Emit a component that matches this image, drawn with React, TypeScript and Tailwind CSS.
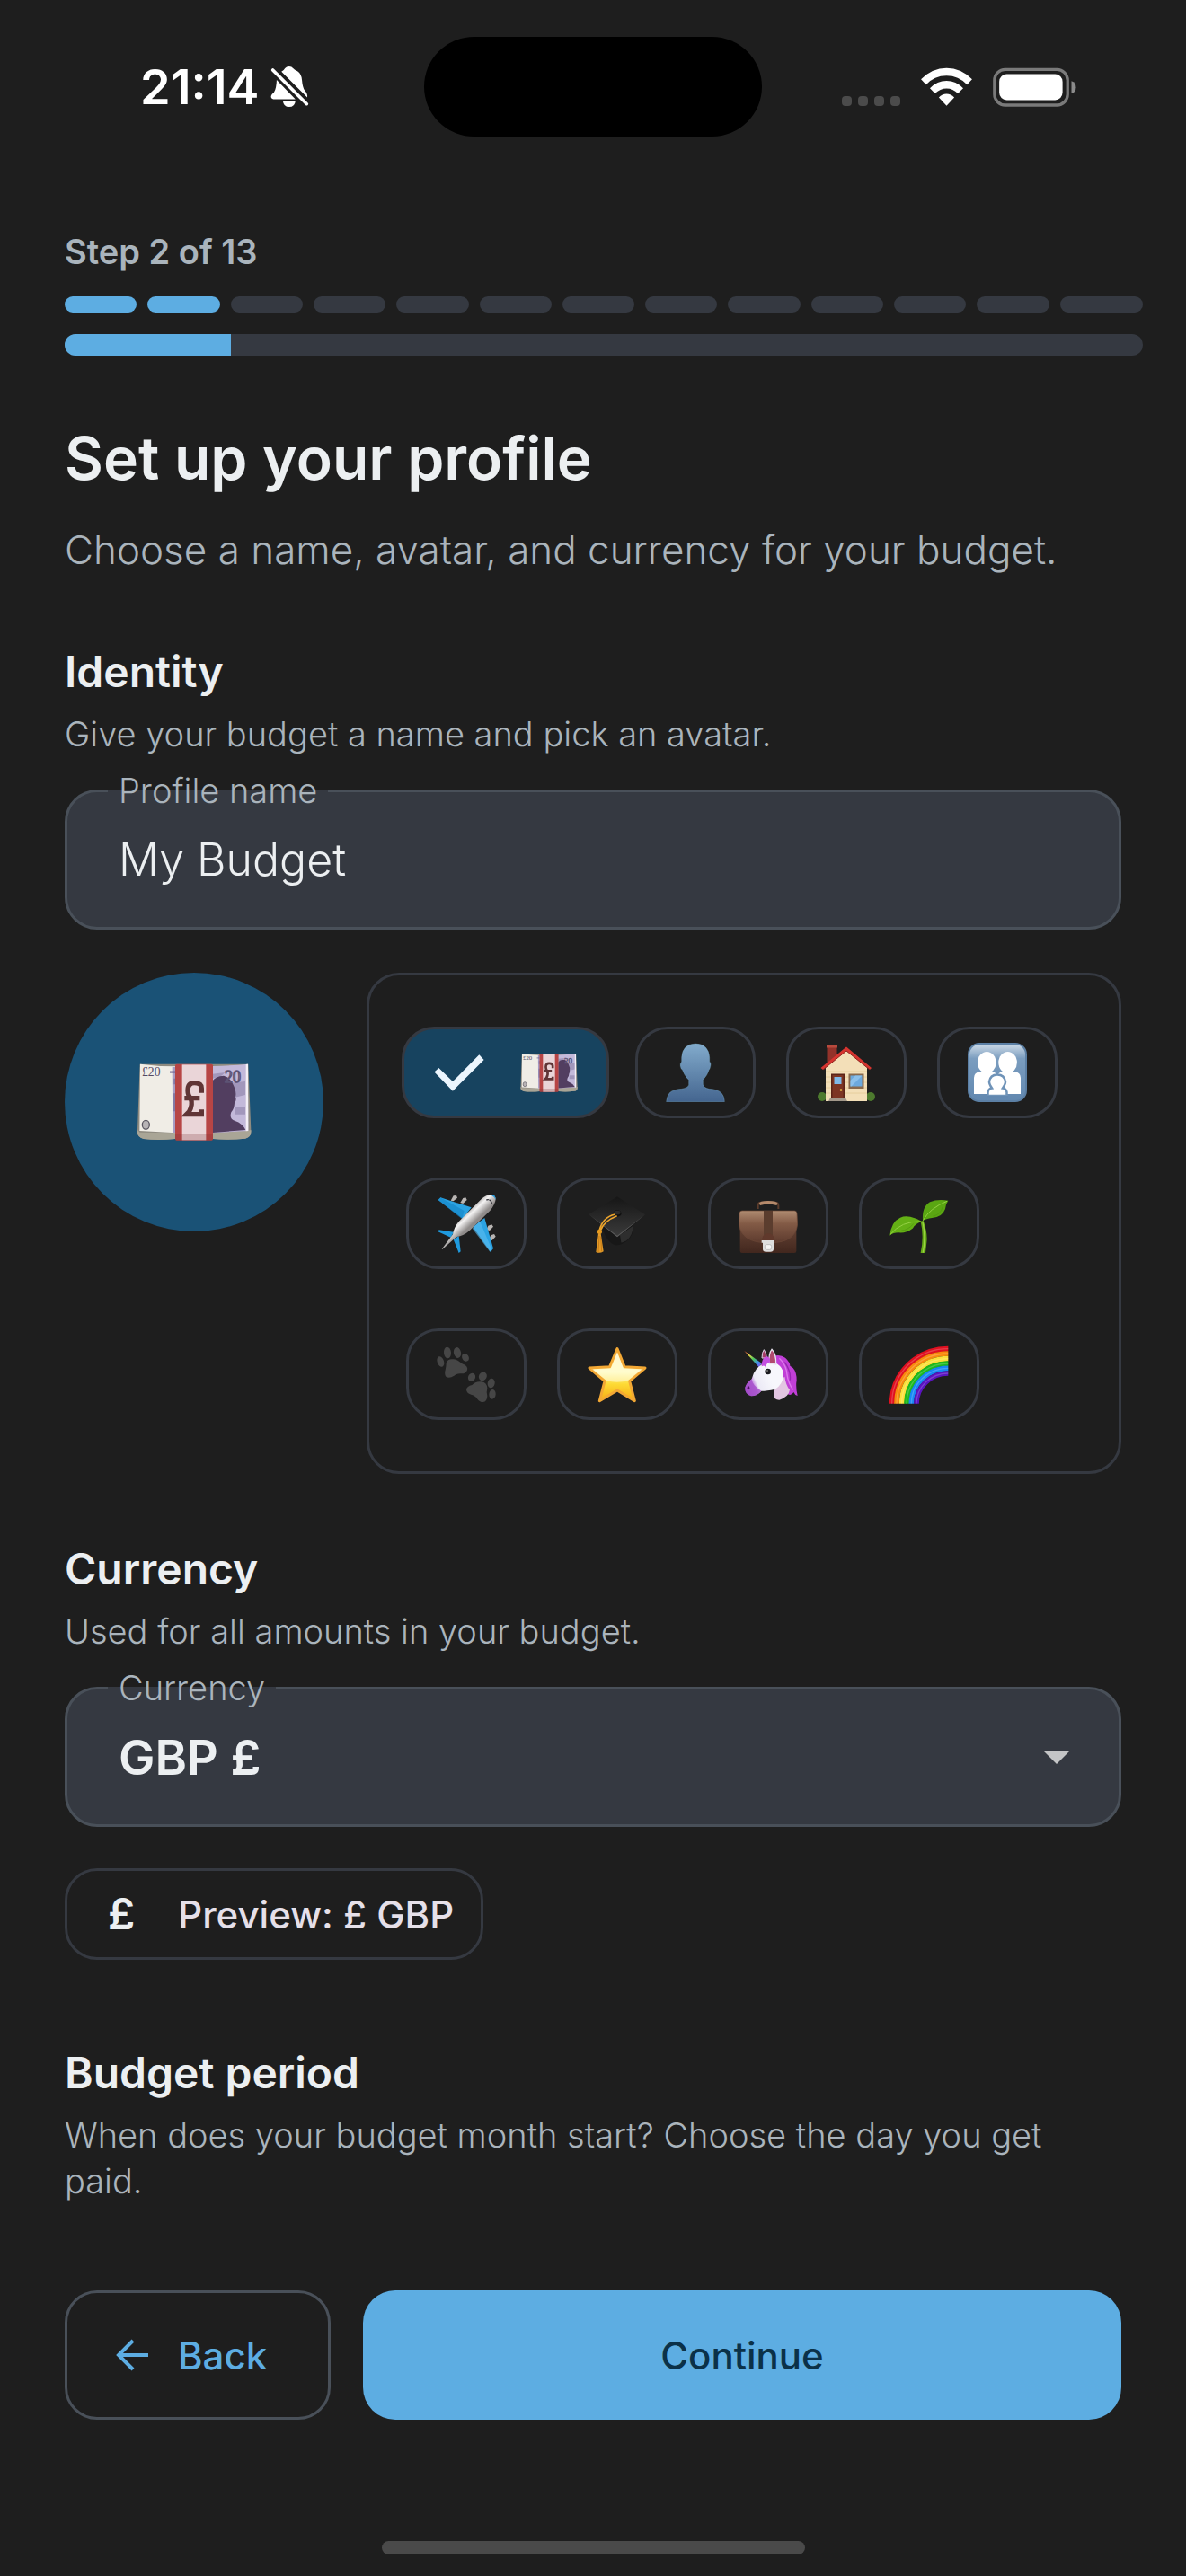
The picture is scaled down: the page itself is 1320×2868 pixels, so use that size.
import { useState } from "react";
import type { ComponentType, ReactNode } from "react";

type ArtProps = { className?: string };

function Money({ className }: ArtProps) {
  return (
    <svg viewBox="40 100 382 258" className={className} aria-hidden="true">
      <path d="M42 322 L50 102 L412 102 L421 322 Q424 345 402 351 Q340 357 294 352 H168 Q110 358 62 352 Q38 345 42 322Z" fill="#8f8b80" />
      <path d="M42 322 L50 330 L170 332 H294 L412 324 L421 322 Q424 345 402 351 Q340 357 294 352 H168 Q110 358 62 352 Q38 345 42 322Z" fill="#a9a596" />
      <path d="M51 102 Q110 110 170 110 V332 L49 325Z" fill="#f0ede6" />
      <path d="M158 112 H170 V331 H160Z" fill="#a79cc4" />
      <path d="M150 125 h18 v8 h-18z M163 150 h7 v20 h-7z M162 200 h8 v60 h-8z" fill="#6d6291" opacity=".6" />
      <path d="M293 109 Q350 108 411 102 L412 325 L293 332Z" fill="#c3b9da" />
      <path d="M404 103 L411 102 L412 325 L404 326Z" fill="#f4f0f6" />
      <path d="M293 135 L335 130 L318 145 L293 150Z M345 165 L402 160 V205 L362 215Z M368 245 H402 V270 H366Z" fill="#8c80a8" opacity=".6" />
      <path d="M293 158 Q302 143 330 141 Q352 146 361 170 Q374 195 369 212 Q374 222 366 232 Q365 252 355 263 Q347 285 368 292 Q392 300 403 322 L293 331Z" fill="#523e60" />
      <text x="333" y="164" fontSize="54" fill="#c3b9da" stroke="#5d5374" strokeWidth="4" fontFamily="'Liberation Serif', serif">20</text>
      <text x="57" y="141" fontSize="41" fill="#554a63" fontFamily="'Liberation Serif', serif">£20</text>
      <ellipse cx="70" cy="305" rx="12" ry="15" fill="#b8b4b6" stroke="#5b5761" strokeWidth="4" />
      <rect x="168" y="102" width="126" height="255" rx="5" fill="#b74545" />
      <rect x="191" y="104" width="80" height="252" fill="#ead5d8" />
      <path d="M168 334 H294 V352 Q294 357 289 357 H173 Q168 357 168 352Z" fill="#7d3532" opacity=".25" />
      <path d="M256 198 V183 Q256 165 232 165 Q210 165 210 190 Q210 206 220 218 Q228 238 214 262 L206 270 H256 V254 M199 216 H250" fill="none" stroke="#603536" strokeWidth="16" />
    </svg>
  );
}

function Person({ className }: ArtProps) {
  return (
    <svg viewBox="933 123 198 198" className={className} aria-hidden="true">
      <defs>
        <linearGradient id="person" x1="0" y1="0" x2="0" y2="1">
          <stop offset="0" stopColor="#82abcc" />
          <stop offset="1" stopColor="#44658f" />
        </linearGradient>
      </defs>
      <path
        d="M1032 126 Q1076 127 1079 172 V187 Q1085 188 1082 202 Q1080 212 1077 214 Q1072 232 1057 247 V262 Q1060 274 1078 277 Q1108 279 1119 291 Q1129 302 1129 320 H935 Q936 302 946 290 Q957 279 986 277 Q1008 273 1010 263 V247 Q994 232 989 214 Q984 212 982 202 Q980 189 986 187 V172 Q989 127 1032 126Z"
        fill="url(#person)"
        stroke="#7db3cf"
        strokeWidth="1"
      />
    </svg>
  );
}

function House({ className }: ArtProps) {
  return (
    <svg viewBox="0 0 66 66" className={className} aria-hidden="true">
      <circle cx="6" cy="60" r="5" fill="#4d7a2e" />
      <circle cx="60" cy="60" r="5" fill="#4d7a2e" />
      <path d="M11.5 3 H22.5 V14 L11.5 23Z" fill="#93322a" />
      <path d="M11 2.5 H23 V5.5 H11Z" fill="#b84a3d" />
      <path d="M10 26 L33 7 L56 26 V65 H10Z" fill="#f3dfb8" />
      <path d="M10 32 H56 M10 38 H56 M10 44 H56 M10 50 H56 M10 56 H56" stroke="#e2c998" strokeWidth=".8" />
      <path d="M33 4.5 L61 28 L59 30 L33 9 L7 30 L4.5 28Z" fill="#d6342f" />
      <path d="M7 30 L33 9 L59 30" fill="none" stroke="#8e241f" strokeWidth="1" />
      <rect x="16" y="34.5" width="15" height="28" fill="#5b2417" />
      <rect x="17.5" y="36" width="12" height="26" fill="#7c3523" />
      <rect x="19.5" y="38" width="8" height="8" fill="#7fb9e8" />
      <circle cx="27" cy="52.5" r="1.3" fill="#f2c94c" />
      <rect x="35.5" y="34.5" width="17" height="16.5" fill="#8a6a4d" />
      <rect x="37.5" y="36.5" width="13" height="12" fill="#6da9dd" />
      <path d="M37.5 42 L43 36.5 H50.5 L38.5 48.5 H37.5Z" fill="#8cc0ea" />
      <path d="M15 61.5 H32 L34 65 H13Z" fill="#a3988a" />
    </svg>
  );
}

function Family({ className }: ArtProps) {
  return (
    <svg viewBox="0 0 66 66" className={className} aria-hidden="true">
      <defs>
        <linearGradient id="family" x1="0" y1="0" x2="0" y2="1">
          <stop offset="0" stopColor="#cbd9e6" />
          <stop offset=".25" stopColor="#7b9dbf" />
          <stop offset="1" stopColor="#6288b0" />
        </linearGradient>
      </defs>
      <rect x="0" y="0" width="66" height="66" rx="13" fill="#5c80a5" />
      <rect x="2" y="2" width="62" height="62" rx="11" fill="url(#family)" />
      <g fill="#fff">
        <ellipse cx="21.3" cy="22" rx="10.3" ry="12" />
        <ellipse cx="44.6" cy="22" rx="10.3" ry="12" />
        <path d="M7 57 V39 Q7 33 14 32 H27 Q33 33 33 39 Q33 33 39 32 H52 Q59 33 59 39 V57Z" />
      </g>
      <path d="M22.5 59 V55 Q23 51 27 50.5 Q24 46 24 43.5 Q25 35.5 33 35.5 Q41 35.5 42 43.5 Q42 46 39 50.5 Q43 51 43.5 55 V59Z" fill="#fff" stroke="#6f93b8" strokeWidth="2.5" />
      <path d="M21 60 H45" stroke="#6288b0" strokeWidth="2" />
    </svg>
  );
}

function Plane({ className }: ArtProps) {
  return (
    <svg viewBox="78 27 198 198" className={className} aria-hidden="true">
      <defs>
        <linearGradient id="fuselage" gradientUnits="userSpaceOnUse" x1="180" y1="80" x2="212" y2="114">
          <stop offset="0" stopColor="#a9a5a4" />
          <stop offset=".4" stopColor="#f4f3f3" />
          <stop offset="1" stopColor="#8f8b8a" />
        </linearGradient>
      </defs>
      <g fill="#b9b5b3">
        <path d="M125 50 L134 34 L144 33 L147 41 L134 52Z" />
        <path d="M157 57 L166 42 L175 40 L179 48 L166 60Z" />
        <path d="M244 148 L250 134 L262 130 L267 137 L255 150Z" />
        <path d="M252 180 L259 166 L270 162 L275 170 L263 183Z" />
      </g>
      <path d="M83 48 L91 40 L194 73 L165 110Z" fill="#2ba3e3" />
      <path d="M83 48 L91 40 L170 84 L163 112Z" fill="#1787c9" opacity=".7" />
      <path d="M238 108 L267 210 L258 222 L199 138Z" fill="#2ba3e3" />
      <path d="M222 118 L262 214 L256 221 L197 143Z" fill="#5cbcf0" opacity=".6" />
      <path d="M81 153 L86 148 L135 155 L125 173Z" fill="#1f9ade" />
      <path d="M134 180 L152 168 L158 220 L152 225Z" fill="#1f9ade" />
      <path
        d="M95 212 L132 163 Q136 138 152 120 L228 44 Q246 29 264 31 Q275 34 275 46 Q273 64 256 84 L188 150 Q168 168 144 171 L98 212Z"
        fill="url(#fuselage)"
      />
      <path d="M258 31 Q275 29 275 47 Q270 37 258 31Z" fill="#1f9ade" />
      <path d="M244 48 Q258 43 263 61" fill="none" stroke="#33333a" strokeWidth="4" strokeDasharray="7 2" />
    </svg>
  );
}

function GradCap({ className }: ArtProps) {
  return (
    <svg viewBox="582 27 198 198" className={className} aria-hidden="true">
      <defs>
        <linearGradient id="cap" x1="0" y1="0" x2="0" y2="1">
          <stop offset="0" stopColor="#161616" />
          <stop offset="1" stopColor="#3b3b3b" />
        </linearGradient>
      </defs>
      <path d="M630 130 L735 125 Q738 165 712 186 Q690 202 672 198 Q640 186 630 130Z" fill="#171717" />
      <path d="M690 165 L733 135 Q734 165 712 184 Q698 192 694 190Z" fill="#2e2e2e" />
      <path d="M586 96 L681 37 L774 97 L681 171Z" fill="url(#cap)" />
      <path d="M586 96 L681 167 L774 97 L681 172Z" fill="#5a5a5a" />
      <ellipse cx="681" cy="93" rx="14" ry="11" fill="#111" />
      <ellipse cx="681" cy="90" rx="11" ry="7" fill="#2c2c2c" />
      <path d="M673 96 Q632 106 621 150 M680 101 Q636 118 625 150" fill="none" stroke="#eda52c" strokeWidth="5" />
      <circle cx="622" cy="154" r="8" fill="#e59a1f" />
      <path d="M618 160 H626 L635 220 Q622 228 610 222Z" fill="#e39a27" />
      <path d="M621 168 L618 222 M626 170 L629 220" stroke="#b86d11" strokeWidth="2" />
    </svg>
  );
}

function Briefcase({ className }: ArtProps) {
  return (
    <svg viewBox="96 27 198 198" className={className} aria-hidden="true">
      <defs>
        <linearGradient id="flap" x1="0" y1="0" x2="0" y2="1">
          <stop offset="0" stopColor="#b08c72" />
          <stop offset=".4" stopColor="#835b46" />
          <stop offset="1" stopColor="#5d3b2e" />
        </linearGradient>
        <linearGradient id="case" x1="0" y1="0" x2="0" y2="1">
          <stop offset="0" stopColor="#7a5341" />
          <stop offset="1" stopColor="#42271e" />
        </linearGradient>
      </defs>
      <path d="M161 78 V66 Q161 56 172 56 H218 Q229 56 229 66 V78" fill="none" stroke="#5c3c2c" strokeWidth="6" />
      <path d="M164 60 Q166 51 195 51 Q224 51 227 60 L223 66 Q195 58 168 66Z" fill="#b58a6b" />
      <rect x="101" y="90" width="188" height="135" rx="7" fill="url(#case)" />
      <path d="M97 130 L99 92 Q100 84 108 84 H283 Q290 84 291 92 L293 130 Q286 190 205 191 H185 Q106 188 97 130Z" fill="url(#flap)" stroke="#6d4938" strokeWidth="2" />
      <rect x="180" y="84" width="30" height="82" fill="#5b3d2e" />
      <path d="M175 184 V176 Q180 160 195 160 Q210 160 215 176 V184Z" fill="#60392c" />
      <path d="M173 183 H216 V191 H213 V213 Q212 221 203 221 H187 Q178 221 177 213 V191 H173Z" fill="#dedede" />
      <rect x="184" y="197" width="22" height="17" rx="6" fill="#f5f5f5" stroke="#aaa" strokeWidth="2" />
    </svg>
  );
}

function Seedling({ className }: ArtProps) {
  return (
    <svg viewBox="600 27 198 198" className={className} aria-hidden="true">
      <path d="M704 120 L713 116 Q728 160 724 190 L720 224 Q712 230 704 224 Q716 170 704 120Z" fill="#68ad18" />
      <path d="M711 122 Q722 170 712 224" fill="none" stroke="#9ad443" strokeWidth="4" />
      <path d="M601 167 Q606 120 636 107 Q665 95 708 120 Q690 124 677 143 Q655 160 630 157 Q612 157 601 167Z" fill="#64b015" />
      <path d="M603 163 Q640 118 704 120" fill="none" stroke="#94d044" strokeWidth="3" />
      <path d="M711 118 Q708 70 735 55 Q760 44 796 50 Q788 60 786 78 Q776 106 742 108 Q722 110 711 118Z" fill="#5aa612" />
      <path d="M712 116 Q735 75 792 52" fill="none" stroke="#94d044" strokeWidth="3" />
      <path d="M640 150 Q660 150 680 128 M745 102 Q770 98 778 70" fill="none" stroke="#4c8f0e" strokeWidth="3" opacity=".6" />
    </svg>
  );
}

function Paws({ className }: ArtProps) {
  return (
    <svg viewBox="78 531 198 198" className={className} aria-hidden="true">
      <g fill="#464646">
        <ellipse cx="91" cy="588" rx="11" ry="18" transform="rotate(-18 91 588)" />
        <ellipse cx="114" cy="558" rx="12" ry="19" transform="rotate(-5 114 558)" />
        <ellipse cx="147" cy="558" rx="12" ry="18" transform="rotate(-12 147 558)" />
        <ellipse cx="174" cy="574" rx="11" ry="14" transform="rotate(-30 174 574)" />
        <path d="M110 592 Q116 577 134 580 Q145 580 155 589 Q162 596 173 599 Q184 607 179 618 Q174 629 160 628 Q145 627 136 635 Q120 646 109 638 Q103 630 107 616 Q110 605 110 592Z" />
        <ellipse cx="195" cy="640" rx="12" ry="14" transform="rotate(25 195 640)" />
        <ellipse cx="232" cy="637" rx="13" ry="15" transform="rotate(30 232 637)" />
        <ellipse cx="260" cy="660" rx="12" ry="16" transform="rotate(12 260 660)" />
        <ellipse cx="264" cy="697" rx="11" ry="16" transform="rotate(5 264 697)" />
        <path d="M196 666 Q208 652 228 655 Q246 658 247 677 Q243 690 247 703 Q246 722 233 723 Q222 723 214 713 Q208 702 193 698 Q177 693 177 681 Q179 670 196 666Z" />
      </g>
    </svg>
  );
}

function Star({ className }: ArtProps) {
  return (
    <svg viewBox="582 531 198 198" className={className} aria-hidden="true">
      <defs>
        <linearGradient id="star" x1="0" y1="0" x2="0" y2="1">
          <stop offset="0" stopColor="#fff0c4" />
          <stop offset=".45" stopColor="#fffab4" />
          <stop offset=".68" stopColor="#fdda34" />
          <stop offset="1" stopColor="#f7a914" />
        </linearGradient>
      </defs>
      <path
        d="M681 545 L705 605 L774 609 L722 653 L739 719 L681 684 L622 719 L639 653 L588 609 L656 605Z"
        fill="url(#star)"
        stroke="#f3a834"
        strokeWidth="9"
        strokeLinejoin="round"
      />
      <path d="M681 556 L701 611 L764 614 L718 650 Q680 662 644 650 L598 614 L660 611Z" fill="#fffde6" opacity=".5" />
    </svg>
  );
}

function Unicorn({ className }: ArtProps) {
  return (
    <svg viewBox="96 531 198 198" className={className} aria-hidden="true">
      <defs>
        <linearGradient id="horn" x1="0" y1="0" x2="1" y2="1">
          <stop offset="0" stopColor="#ef3b3b" />
          <stop offset=".25" stopColor="#f9dc4a" />
          <stop offset=".5" stopColor="#4cc75a" />
          <stop offset=".75" stopColor="#3f8df0" />
          <stop offset="1" stopColor="#a63fe0" />
        </linearGradient>
        <linearGradient id="muzzle" gradientUnits="userSpaceOnUse" x1="120" y1="690" x2="205" y2="650">
          <stop offset="0" stopColor="#9b3fc4" />
          <stop offset=".35" stopColor="#c07be0" />
          <stop offset=".5" stopColor="#eceaf6" />
          <stop offset="1" stopColor="#f7f7fc" />
        </linearGradient>
      </defs>
      <path d="M205 572 Q232 560 252 575 Q268 590 268 602 Q290 612 290 650 Q286 672 293 702 Q284 700 280 690 Q272 705 255 694 Q240 680 240 650Z" fill="#c03fd6" />
      <path d="M232 577 Q256 600 258 632 Q262 660 278 682" fill="none" stroke="#dc78ec" strokeWidth="4" />
      <path d="M250 590 Q272 620 268 650" fill="none" stroke="#9526b0" strokeWidth="4" />
      <path d="M222 660 L250 638 Q254 668 267 682 Q264 706 232 716 Q214 716 213 700 Q216 680 222 660Z" fill="#e3c6e2" />
      <path d="M174 576 Q174 556 181 548 Q190 562 190 576Z" fill="#a33c66" stroke="#d9d3e4" strokeWidth="3" />
      <path d="M115 552 L174 594 L164 607Z" fill="url(#horn)" />
      <path
        d="M163 605 Q185 588 215 590 Q246 604 246 632 Q244 664 218 680 Q190 686 172 686 Q158 703 138 703 Q116 696 118 674 Q124 658 140 646 Q146 620 163 605Z"
        fill="url(#muzzle)"
      />
      <path d="M118 674 Q124 658 140 646 Q142 668 172 686 Q158 703 138 703 Q116 696 118 674Z" fill="#a54fc9" opacity=".8" />
      <path d="M198 594 Q196 560 207 547 Q222 562 221 597Z" fill="#b14a6e" stroke="#e9e4f0" strokeWidth="4" />
      <path d="M173 604 Q172 578 188 570 Q206 572 200 592 Q190 590 186 608 Q184 598 173 604Z" fill="#c44fe0" />
      <circle cx="194" cy="621" r="10" fill="#1a1a1f" />
      <circle cx="192" cy="618" r="3" fill="#777" />
      <ellipse cx="129" cy="676" rx="4" ry="6" fill="#4a1360" />
    </svg>
  );
}

const rainbowBands: [number, string][] = [
  [188, "#e01020"],
  [172, "#f98a0c"],
  [155, "#fbe03a"],
  [139, "#1db91d"],
  [123, "#1788f5"],
  [106, "#5a13c0"],
];

function Rainbow({ className }: ArtProps) {
  return (
    <svg viewBox="600 531 198 198" className={className} aria-hidden="true">
      {rainbowBands.map(([r, color]) => (
        <g key={color} fill="none">
          <path d={`M${796 - r} 728 A${r} ${r - 5} 0 0 1 796 ${733 - r}`} stroke={color} strokeWidth="17" />
          <path d={`M${796 - r} 728 A${r} ${r - 5} 0 0 1 796 ${733 - r}`} stroke="#fff" strokeOpacity=".2" strokeWidth="4" />
        </g>
      ))}
    </svg>
  );
}

function BellOff() {
  return (
    <svg viewBox="484 74 130 140" className="h-[47px] w-[43px]" aria-hidden="true" fill="#fff">
      <path d="M521 93 Q530 88 533 82 Q538 76 547 76 Q556 76 560 82 Q565 88 575 92 Q589 102 590 122 Q592 146 599 156 Q610 168 608 180Z" />
      <path d="M505 121 L568 186 H494 Q485 185 486 176 Q487 170 496 163 Q504 150 505 121Z" />
      <path d="M526 192 H568 Q566 212 547 212 Q528 212 526 192Z" />
      <path d="M492 88 L606 202" stroke="#fff" strokeWidth="11" strokeLinecap="round" />
    </svg>
  );
}

function Wifi() {
  return (
    <svg viewBox="312 73 178 130" className="h-[43px] w-[59px]" aria-hidden="true" fill="#fff">
      <path d="M315 113 Q352 75 401 75 Q450 75 487 113 L470 131 Q441 101 401 101 Q360 101 332 131Z" />
      <path d="M345 143 Q369 118 401 118 Q433 118 457 143 L439 161 Q423 144 401 144 Q379 144 362 161Z" />
      <path d="M375 174 Q386 162 401 162 Q416 162 427 174 L401 202Z" />
    </svg>
  );
}

function Battery() {
  return (
    <svg viewBox="553 73 284 133" className="h-[44px] w-[95px]" aria-hidden="true">
      <rect x="560" y="80" width="246" height="120" rx="36" fill="none" stroke="#7a7a7a" strokeWidth="10" />
      <rect x="576" y="96" width="213" height="87" rx="25" fill="#fff" />
      <path d="M819 119 Q834 124 834 140 Q834 156 819 161Z" fill="#8b8b8b" />
    </svg>
  );
}

function StatusBar() {
  return (
    <header className="grid grid-cols-[1fr_376px_1fr] pt-[41px]">
      <div className="flex items-center gap-3 pl-[156px]">
        <span className="text-[54px] leading-[64px] font-semibold text-white">21:14</span>
        <BellOff />
      </div>
      <div className="h-[111px] rounded-full bg-black" />
      <div className="flex items-center justify-end pr-[121px]">
        <div className="flex h-[43px] items-end gap-[7px]">
          {[0, 1, 2, 3].map((dot) => (
            <span key={dot} className="size-[11px] rounded-[4px] bg-[#4b4b4b]" />
          ))}
        </div>
        <div className="ml-[22px] flex items-center gap-[21px]">
          <Wifi />
          <Battery />
        </div>
      </div>
    </header>
  );
}

const totalSteps = 13;
const currentStep = 2;

function Progress() {
  return (
    <div>
      <p className="text-[38px] leading-[48px] font-semibold text-[#aab4bc]">
        Step {currentStep} of {totalSteps}
      </p>
      <div className="-mr-6 mt-[26px] grid grid-cols-13">
        {Array.from({ length: totalSteps }, (_, i) => (
          <div key={i} className="pr-3 last:pr-0">
            <div className={i < currentStep ? "h-[18px] rounded-full bg-[#5dade2]" : "h-[18px] rounded-full bg-[#353941]"} />
          </div>
        ))}
      </div>
      <div
        role="progressbar"
        aria-label="Setup progress"
        aria-valuemin={0}
        aria-valuemax={totalSteps}
        aria-valuenow={currentStep}
        className="-mr-6 mt-6 h-6 overflow-hidden rounded-full bg-[#353941]"
      >
        <div className="h-full bg-[#5dade2]" style={{ width: `${(currentStep / totalSteps) * 100}%` }} />
      </div>
    </div>
  );
}

function SectionHeading({ title, children }: { title: string; children: ReactNode }) {
  return (
    <>
      <h2 className="text-[48px] leading-[64px] font-semibold text-[#eceff1]">{title}</h2>
      <p className="mt-3 text-[38px] leading-[51px] font-light text-[#aab4bc]">{children}</p>
    </>
  );
}

function Field({ id, label, children }: { id: string; label: string; children: ReactNode }) {
  return (
    <div className="relative mt-9 flex h-[156px] items-center rounded-[36px] border-3 border-[#495059] bg-[#353941]">
      {children}
      <label
        htmlFor={id}
        className="absolute -top-[3px] left-[45px] h-[3px] bg-[#353941] px-3 text-[38px] leading-[3px] font-light text-[#aab4bc]"
      >
        {label}
      </label>
    </div>
  );
}

const avatars: { name: string; Art: ComponentType<ArtProps> }[] = [
  { name: "Pound notes", Art: Money },
  { name: "Person", Art: Person },
  { name: "House", Art: House },
  { name: "Family", Art: Family },
  { name: "Airplane", Art: Plane },
  { name: "Graduation cap", Art: GradCap },
  { name: "Briefcase", Art: Briefcase },
  { name: "Seedling", Art: Seedling },
  { name: "Paw prints", Art: Paws },
  { name: "Star", Art: Star },
  { name: "Unicorn", Art: Unicorn },
  { name: "Rainbow", Art: Rainbow },
];

function AvatarPicker() {
  const [selected, setSelected] = useState(0);
  const Current = avatars[selected].Art;
  return (
    <div className="mt-12 flex items-start gap-12">
      <div className="flex size-[288px] shrink-0 items-center justify-center rounded-full bg-[#1a5276]">
        <Current className="h-[86px] w-[128px]" />
      </div>
      <div className="flex flex-1 flex-wrap gap-x-[34px] gap-y-[66px] rounded-[36px] border-3 border-[#353941] px-[41px] py-[57px]">
        {avatars.map(({ name, Art }, i) => (
          <button
            key={name}
            type="button"
            aria-label={name}
            aria-pressed={i === selected}
            onClick={() => setSelected(i)}
            className={
              i === selected
                ? "-mx-[5px] flex h-[102px] w-[231px] items-center justify-center gap-10 rounded-[36px] border-3 border-[#353941] bg-[#17435f]"
                : "flex h-[102px] w-[134px] items-center justify-center rounded-[36px] border-3 border-[#353941]"
            }
          >
            {i === selected && (
              <svg viewBox="156 159 169 124" className="h-[41px] w-[56px]" aria-hidden="true">
                <path d="M157 218 L172 204 L219 250 L308 160 L324 177 L219 282Z" fill="#ebf5fd" />
              </svg>
            )}
            <Art className={i === 0 ? "h-[43px] w-[64px]" : "size-[66px]"} />
          </button>
        ))}
      </div>
    </div>
  );
}

export default function App() {
  return (
    <div className="flex min-h-screen flex-col bg-[#1e1e1e] font-['Inter',sans-serif] text-[#eceff1]">
      <StatusBar />
      <main className="px-[72px] pt-[104px]">
        <Progress />
        <h1 className="mt-[74px] text-[66px] leading-[80px] font-semibold">Set up your profile</h1>
        <p className="mt-8 text-[44px] leading-[60px] font-light text-[#aab4bc]">
          Choose a name, avatar, and currency for your budget.
        </p>

        <section className="mt-[74px]">
          <SectionHeading title="Identity">Give your budget a name and pick an avatar.</SectionHeading>
          <Field id="profile-name" label="Profile name">
            <input
              id="profile-name"
              type="text"
              defaultValue="My Budget"
              className="h-full w-full rounded-[33px] bg-transparent px-[57px] text-[50px] font-light outline-none"
            />
          </Field>
          <AvatarPicker />
        </section>

        <section className="mt-[74px]">
          <SectionHeading title="Currency">Used for all amounts in your budget.</SectionHeading>
          <Field id="currency" label="Currency">
            <select
              id="currency"
              defaultValue="GBP"
              className="h-full w-full appearance-none rounded-[33px] bg-transparent px-[57px] text-[54px] font-semibold outline-none"
            >
              <option value="GBP">GBP £</option>
            </select>
            <svg viewBox="0 0 30 15" className="pointer-events-none absolute right-[54px] h-[15px] w-[30px]" aria-hidden="true">
              <path d="M0 0 H30 L15 15Z" fill="#c4c5c6" />
            </svg>
          </Field>
          <div className="mt-[46px] flex h-[102px] w-fit items-center gap-12 rounded-[36px] border-3 border-[#353941] pr-[30px] pl-[45px]">
            <span className="text-[48px] font-semibold">£</span>
            <span className="text-[42px] font-medium text-[#e6e0e9]">Preview: £ GBP</span>
          </div>
        </section>

        <section className="mt-[94px]">
          <SectionHeading title="Budget period">
            When does your budget month start? Choose the day you get paid.
          </SectionHeading>
        </section>

        <div className="mt-24 flex gap-9">
          <button
            type="button"
            className="flex h-36 w-[296px] items-center gap-[33px] rounded-[36px] border-3 border-[#495059] pl-[54px] text-[42px] font-medium text-[#5dade2]"
          >
            <svg viewBox="0 0 36 36" className="size-9" aria-hidden="true" fill="none" stroke="#5dade2" strokeWidth="4">
              <path d="M36 18 H3 M19 2 L3 18 L19 34" />
            </svg>
            Back
          </button>
          <button type="button" className="h-36 flex-1 rounded-[36px] bg-[#5dade2] text-[42px] font-medium text-[#0b3148]">
            Continue
          </button>
        </div>
      </main>
      <div className="mx-auto mt-auto mb-6 h-[15px] w-[471px] rounded-full bg-[#4a4a4a]" />
    </div>
  );
}
